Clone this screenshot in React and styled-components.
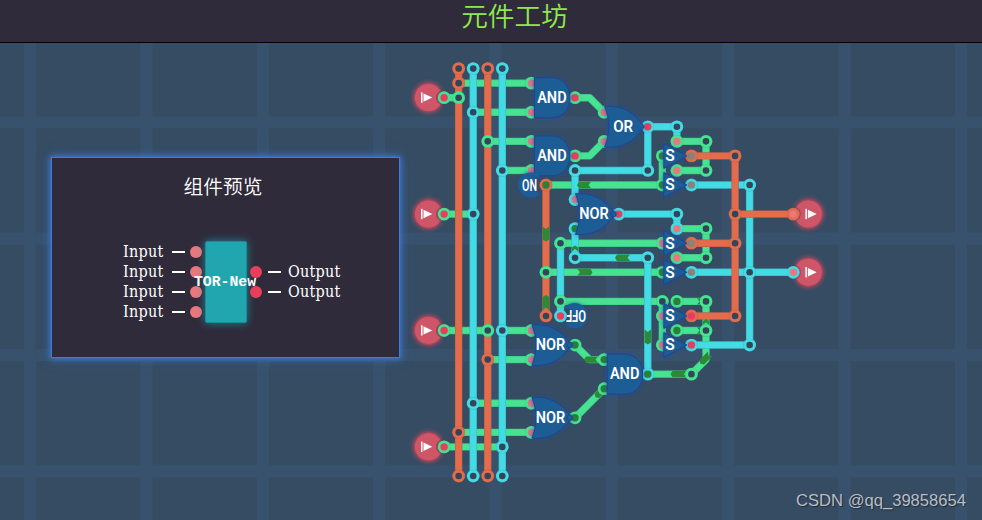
import styled, { createGlobalStyle } from "styled-components";

const GlobalStyle = createGlobalStyle`
  * {
    box-sizing: border-box;
  }

  body {
    margin: 0;
    overflow: hidden;
    background: #364c63;
  }
`;

const Page = styled.div`
  position: relative;
  display: flex;
  flex-direction: column;
  width: 982px;
  height: 520px;
  overflow: hidden;
`;

const Header = styled.header`
  display: flex;
  justify-content: center;
  height: 43px;
  padding-left: 47px;
  background: #2f2b3b;
  border-bottom: 1px solid #000;
`;

const Title = styled.h1`
  margin: 0;
  font: 350 26.7px/30px "Noto Sans CJK SC", sans-serif;
  color: #8eea4b;
`;

const Workspace = styled.main`
  display: flex;
  align-items: flex-start;
  height: 477px;
  background-color: #364c63;
  background-image:
    linear-gradient(90deg, #38526d 11.5px, transparent 11.5px),
    linear-gradient(#38526d 11.5px, transparent 11.5px);
  background-size: 116.35px 116.35px;
  background-position: 24.2px 73.3px;
`;

const PreviewPanel = styled.section`
  flex: none;
  width: 347px;
  height: 199px;
  margin: 115px 0 0 52px;
  background: #2f2b3b;
  box-shadow:
    0 0 1px 1px #3a7bdc,
    0 0 6px 2px #3a78d0,
    0 0 14px 1px rgba(58, 110, 180, 0.45);
`;

const PreviewTitle = styled.h2`
  margin: 0;
  padding: 13px 5px 0 0;
  font: 350 19.8px/30px "Noto Sans CJK SC", sans-serif;
  text-align: center;
  color: #fff;
`;

const Component = styled.div`
  display: flex;
  align-items: center;
  margin: 40px 0 0 71px;
`;

const Pins = styled.div`
  display: flex;
  flex-direction: column;
`;

const Pin = styled.div`
  display: flex;
  align-items: center;
  gap: ${({ $out }) => ($out ? "6px" : "5px")};
  height: 20px;
  font: 16px/20px "DejaVu Serif Condensed", "DejaVu Serif", serif;
  font-stretch: condensed;
  letter-spacing: 0.25px;
  color: #fff;
`;

const PinName = styled.span`
  width: ${({ $out }) => ($out ? "53px" : "44px")};
  margin-left: ${({ $out }) => ($out ? "1px" : "0")};
  white-space: nowrap;
`;

const Lead = styled.span`
  width: 13px;
  height: 2px;
  background: #fff;
`;

const Dot = styled.span`
  width: 12px;
  height: 12px;
  border-radius: 50%;
  background: ${({ $out }) => ($out ? "#e83e5c" : "#e9777e")};
`;

const Chip = styled.div`
  display: flex;
  align-items: center;
  justify-content: center;
  width: 42px;
  height: 82px;
  margin: 0 3px;
  border: 1px solid #168e99;
  border-radius: 2px;
  background: #21a5af;
  box-shadow: 0 0 9px rgba(33, 165, 175, 0.7);
`;

const ChipName = styled.span`
  flex: none;
  z-index: 1;
  margin-left: -2px;
  font: bold 14.8px/20px "Liberation Mono", monospace;
  color: #fff;
`;

const Circuit = styled.svg`
  flex: none;
  display: block;
  width: 583px;
  height: 477px;
`;

const GateLabel = styled.text`
  font: 600 ${({ $size }) => $size || 15.6}px Roboto, sans-serif;
  fill: #fff;
  text-anchor: middle;
`;

const Watermark = styled.footer`
  position: absolute;
  right: 16px;
  bottom: 9px;
  font: 16.6px/20px "Liberation Sans", sans-serif;
  color: #b9bdc4;
  text-shadow: 1px 1px 1px rgba(20, 28, 40, 0.7);
`;

const UNIT = 14.55;
const X = (c) => 444.1 + c * UNIT;
const Y = (r) => 68.6 + r * UNIT;

const COLORS = {
  g: ["#46e492", "#3fc585"],
  c: ["#43dbe4", "#3bbcc8"],
  o: ["#e36c4c", "#c56048"],
};

const ON_DOT = "#e83e5c";
const PIN_DOT = "#d9778a";
const LOW_DOT = "#2a8038";
const IDLE_DOT = "#8c8379";
const HOLE = "#344459";

// [color, c, r, c, r, ...] in grid units, painted in order
const WIRES = [
  ["g", 0, 2, 1, 2],
  ["g", 1, 1, 6, 1],
  ["g", 2, 3, 6, 3],
  ["g", 3, 5, 6, 5],
  ["g", 4, 7, 6, 7],
  ["g", 0, 10, 2, 10],
  ["g", 0, 18, 3, 18],
  ["g", 4, 18, 6, 18],
  ["g", 3, 20, 6, 20],
  ["g", 2, 23, 6, 23],
  ["g", 1, 25, 6, 25],
  ["g", 0, 26, 4, 26],
  ["o", 1, 0, 1, 28],
  ["c", 2, 0, 2, 28],
  ["o", 3, 0, 3, 28],
  ["c", 4, 0, 4, 28],
  ["g", 9, 2, 10, 2, 11, 3],
  ["g", 9, 6, 10, 6, 11, 5],
  ["g", 9, 19, 10, 20, 11, 20],
  ["g", 9, 24, 11, 22],
  ["g", 15, 6, 15, 8],
  ["g", 7, 8, 15, 8],
  ["g", 8, 12, 15, 12],
  ["g", 7, 14, 15, 14],
  ["g", 8, 16, 15, 16, 15, 19],
  ["o", 7, 8, 7, 17],
  ["c", 8, 17, 8, 12],
  ["c", 14, 4, 16, 4, 16, 5],
  ["c", 14, 4, 14, 7, 9, 7, 9, 9],
  ["c", 12, 10, 16, 10, 16, 11],
  ["c", 9, 11, 9, 13, 14, 13, 14, 21],
  ["g", 16, 5, 18, 5, 18, 7, 16, 7],
  ["g", 16, 11, 18, 11, 18, 13, 16, 13],
  ["g", 14, 21, 17, 21, 18, 20, 18, 16, 16, 16],
  ["g", 18, 18, 16, 18],
  ["c", 17, 8, 21, 8, 21, 19, 17, 19],
  ["c", 17, 14, 24, 14],
  ["o", 17, 6, 20, 6, 20, 17, 17, 17],
  ["o", 17, 12, 20, 12],
  ["o", 20, 10, 24, 10],
];

// [x, y, rotation, length] of the low-signal pulses
const PULSES = [
  [585, 185, 0, 12],
  [545.9, 233, -90, 13],
  [545.9, 303.5, 90, 13],
  [575, 249.6, 90, 4],
  [623.5, 257.7, 0, 13],
  [584, 272.3, 180, 13],
  [647.8, 336, -90, 13],
  [592, 359.6, 0, 12],
  [679.5, 374.1, 0, 14],
  [706, 358, -45, 12],
  [699, 301.4, 180, 4],
  [699, 330.5, 180, 4],
  [706, 323, 90, 4],
  [599, 393.6, -45, 6],
];

const JOINTS = [
  ["o", 1, 0], ["c", 2, 0], ["o", 3, 0], ["c", 4, 0],
  ["o", 1, 28], ["c", 2, 28], ["o", 3, 28], ["c", 4, 28],
  ["o", 1, 1], ["g", 1, 2], ["c", 2, 3], ["g", 3, 5], ["c", 4, 7],
  ["c", 2, 10], ["g", 3, 18], ["c", 4, 18], ["o", 3, 20],
  ["c", 2, 23], ["o", 1, 25], ["c", 4, 26],
  ["c", 9, 7], ["c", 14, 7], ["c", 16, 4], ["g", 18, 5], ["g", 18, 7],
  ["c", 16, 10], ["g", 18, 11], ["g", 18, 13], ["g", 8, 12], ["g", 7, 14],
  ["c", 9, 13], ["c", 14, 13], ["g", 8, 16], ["g", 15, 16], ["o", 7, 17],
  ["g", 18, 16], ["g", 18, 18], ["g", 17, 21],
  ["o", 20, 6], ["o", 20, 10], ["o", 20, 12], ["o", 20, 17],
  ["c", 21, 8], ["c", 21, 14], ["c", 21, 19],
];

const PINS = [
  ["g", 0, 2, ON_DOT], ["g", 0, 10, ON_DOT], ["g", 0, 18, ON_DOT], ["g", 0, 26, ON_DOT],
  ["g", 6, 1, PIN_DOT], ["g", 6, 3, PIN_DOT], ["g", 6, 5, PIN_DOT], ["g", 6, 7, PIN_DOT],
  ["g", 6, 18, PIN_DOT], ["g", 6, 20, PIN_DOT], ["g", 6, 23, PIN_DOT], ["g", 6, 25, PIN_DOT],
  ["g", 9, 2, ON_DOT], ["g", 9, 6, ON_DOT], ["g", 9, 19, LOW_DOT], ["g", 9, 24, LOW_DOT],
  ["g", 11, 3, PIN_DOT], ["g", 11, 5, PIN_DOT], ["g", 11, 20, LOW_DOT], ["g", 11, 22, LOW_DOT],
  ["c", 14, 4, ON_DOT], ["c", 9, 9, PIN_DOT], ["c", 9, 11, LOW_DOT],
  ["c", 12, 10, ON_DOT], ["c", 14, 21, LOW_DOT],
  ["g", 16, 5, "#e9777e"], ["g", 16, 7, "#e9777e"], ["c", 16, 11, "#e9777e"],
  ["g", 16, 13, "#e9777e"], ["g", 16, 16, LOW_DOT], ["g", 16, 18, LOW_DOT],
  ["g", 15, 6, LOW_DOT], ["g", 15, 8, LOW_DOT], ["g", 15, 12, PIN_DOT],
  ["g", 15, 14, LOW_DOT], ["g", 15, 17, PIN_DOT], ["g", 15, 19, PIN_DOT],
  ["o", 17, 6, IDLE_DOT], ["c", 17, 8, IDLE_DOT], ["o", 17, 12, IDLE_DOT],
  ["c", 17, 14, IDLE_DOT], ["o", 17, 17, ON_DOT], ["c", 17, 19, ON_DOT],
  ["o", 24, 10, "#e9777e"], ["c", 24, 14, "#e9777e"],
];

// c, r is the point midway between the two input pins
const GATES = [
  { kind: "AND", c: 6, r: 2 },
  { kind: "AND", c: 6, r: 6 },
  { kind: "OR", c: 11, r: 4 },
  { kind: "NOR", c: 9, r: 10 },
  { kind: "NOR", c: 6, r: 19 },
  { kind: "NOR", c: 6, r: 24 },
  { kind: "AND", c: 11, r: 21 },
];

const SWITCH_ROWS = [6, 8, 12, 14, 17, 19];

const AND_BODY = "M3 -20H20C32 -20 38.5 -11 38.5 0S32 20 20 20H3Z";
const OR_BODY = "M0.5 -20.3C18 -21.5 30 -15 40 0C30 15 18 21.5 0.5 20.3C6 7 6 -7 0.5 -20.3Z";

function Wire({ wire }) {
  const [color, ...coords] = wire;
  const points = [];
  for (let i = 0; i < coords.length; i += 2) {
    points.push(`${X(coords[i])},${Y(coords[i + 1])}`);
  }
  const [main, edge] = COLORS[color];
  return (
    <g fill="none" strokeLinejoin="round">
      <polyline points={points.join(" ")} stroke={edge} strokeWidth="7.4" />
      <polyline points={points.join(" ")} stroke={main} strokeWidth="6" />
    </g>
  );
}

function Pulse({ x, y, angle, length }) {
  const h = length / 2;
  return (
    <path
      d={`M${-h} -3.2H${h}L${h - 2.5} 0L${h} 3.2H${-h}L${-h - 2} 0Z`}
      transform={`translate(${x} ${y}) rotate(${angle})`}
      fill="#2a8a36"
    />
  );
}

function Node({ color, c, r, dot }) {
  return (
    <g transform={`translate(${X(c)} ${Y(r)})`}>
      <circle r="6.4" fill={COLORS[color][1]} />
      <circle r="6.1" fill={COLORS[color][0]} />
      <circle r={dot ? 3.7 : 3.3} fill={dot || HOLE} />
    </g>
  );
}

function Gate({ kind, c, r }) {
  const body = kind === "AND" ? AND_BODY : OR_BODY;
  return (
    <g transform={`translate(${X(c)} ${Y(r)})`}>
      <g filter="url(#blueGlow)" fill="#1f5d95" stroke="#1d4592" strokeWidth="1">
        <path d={body} />
        {kind === "NOR" && <circle cx="38.3" r="2.8" />}
      </g>
      <GateLabel
        x={kind === "AND" ? 20.5 : 19}
        y="5.3"
        textLength={kind === "OR" ? 20 : 29.5}
        lengthAdjust="spacingAndGlyphs"
      >
        {kind}
      </GateLabel>
    </g>
  );
}

function Switch({ row }) {
  return (
    <g transform={`translate(${X(15)} ${Y(row)})`}>
      <path
        d="M1.5 -12.5L24.5 0L1.5 12.5Z"
        filter="url(#blueGlow)"
        fill="#1f5d95"
        stroke="#1d4592"
      />
      <GateLabel x="7.6" y="5.4">S</GateLabel>
    </g>
  );
}

function Terminal({ x, y, output }) {
  return (
    <g transform={`translate(${x} ${y})`}>
      <path
        d="M12.2 -6.8A14 14 0 1 0 12.2 6.8A7.5 7.5 0 0 1 12.2 -6.8Z"
        transform={output ? "scale(-1 1)" : undefined}
        filter="url(#redGlow)"
        fill="#cf5768"
        stroke="#a93f52"
        strokeWidth="0.8"
      />
      <g transform={output ? "translate(4.6 0)" : undefined} fill="#fff">
        <rect x="-7.5" y="-5.2" width="1.5" height="10.4" />
        <path d="M-5 -4.2L3.8 0L-5 4.2Z" />
      </g>
    </g>
  );
}

function Constant({ x, y, label, flipped }) {
  return (
    <g transform={`translate(${x} ${y})${flipped ? " rotate(180)" : ""}`}>
      <path
        d="M9.5 -8.2A12.6 12.6 0 1 0 9.5 8.2A7 7 0 0 1 9.5 -8.2Z"
        filter="url(#blueGlow)"
        fill="#1f5d95"
      />
      <GateLabel
        $size={16}
        x="-1.5"
        y="5.7"
        textLength={flipped ? 20 : 15}
        lengthAdjust="spacingAndGlyphs"
      >
        {label}
      </GateLabel>
    </g>
  );
}

function CircuitBoard() {
  return (
    <Circuit viewBox="399 43 583 477">
      <defs>
        <filter id="blueGlow" x="-30%" y="-30%" width="160%" height="160%">
          <feDropShadow dx="0" dy="0" stdDeviation="2" floodColor="#2349a0" floodOpacity="0.8" />
        </filter>
        <filter id="redGlow" x="-40%" y="-40%" width="180%" height="180%">
          <feDropShadow dx="0" dy="0" stdDeviation="2.8" floodColor="#e8485e" floodOpacity="1" />
        </filter>
      </defs>
      {[2, 10, 18, 26].map((row) => (
        <Terminal key={row} x={428.5} y={Y(row) - 0.1} />
      ))}
      {[10, 14].map((row) => (
        <Terminal key={row} x={808.3} y={Y(row) - 0.1} output />
      ))}
      {WIRES.map((wire) => (
        <Wire key={wire.join()} wire={wire} />
      ))}
      {PULSES.map(([x, y, angle, length]) => (
        <Pulse key={`${x},${y}`} x={x} y={y} angle={angle} length={length} />
      ))}
      {JOINTS.map(([color, c, r]) => (
        <Node key={`${c},${r}`} color={color} c={c} r={r} />
      ))}
      {PINS.map(([color, c, r, dot]) => (
        <Node key={`${c},${r}`} color={color} c={c} r={r} dot={dot} />
      ))}
      {GATES.map((gate) => (
        <Gate key={`${gate.c},${gate.r}`} {...gate} />
      ))}
      {SWITCH_ROWS.map((row) => (
        <Switch key={row} row={row} />
      ))}
      <Constant x={531} y={185} label="ON" />
      <Node color="o" c={7} r={8} dot={LOW_DOT} />
      <Constant x={574.5} y={315.7} label="OFF" flipped />
      <Node color="c" c={8} r={17} dot={ON_DOT} />
    </Circuit>
  );
}

export default function App() {
  return (
    <Page>
      <GlobalStyle />
      <Header>
        <Title>元件工坊</Title>
      </Header>
      <Workspace>
        <PreviewPanel>
          <PreviewTitle>组件预览</PreviewTitle>
          <Component>
            <Pins>
              {[0, 1, 2, 3].map((i) => (
                <Pin key={i}>
                  <PinName>Input</PinName>
                  <Lead />
                  <Dot />
                </Pin>
              ))}
            </Pins>
            <Chip>
              <ChipName>TOR-New</ChipName>
            </Chip>
            <Pins>
              {[0, 1].map((i) => (
                <Pin key={i} $out>
                  <Dot $out />
                  <Lead />
                  <PinName $out>Output</PinName>
                </Pin>
              ))}
            </Pins>
          </Component>
        </PreviewPanel>
        <CircuitBoard />
      </Workspace>
      <Watermark>CSDN @qq_39858654</Watermark>
    </Page>
  );
}
